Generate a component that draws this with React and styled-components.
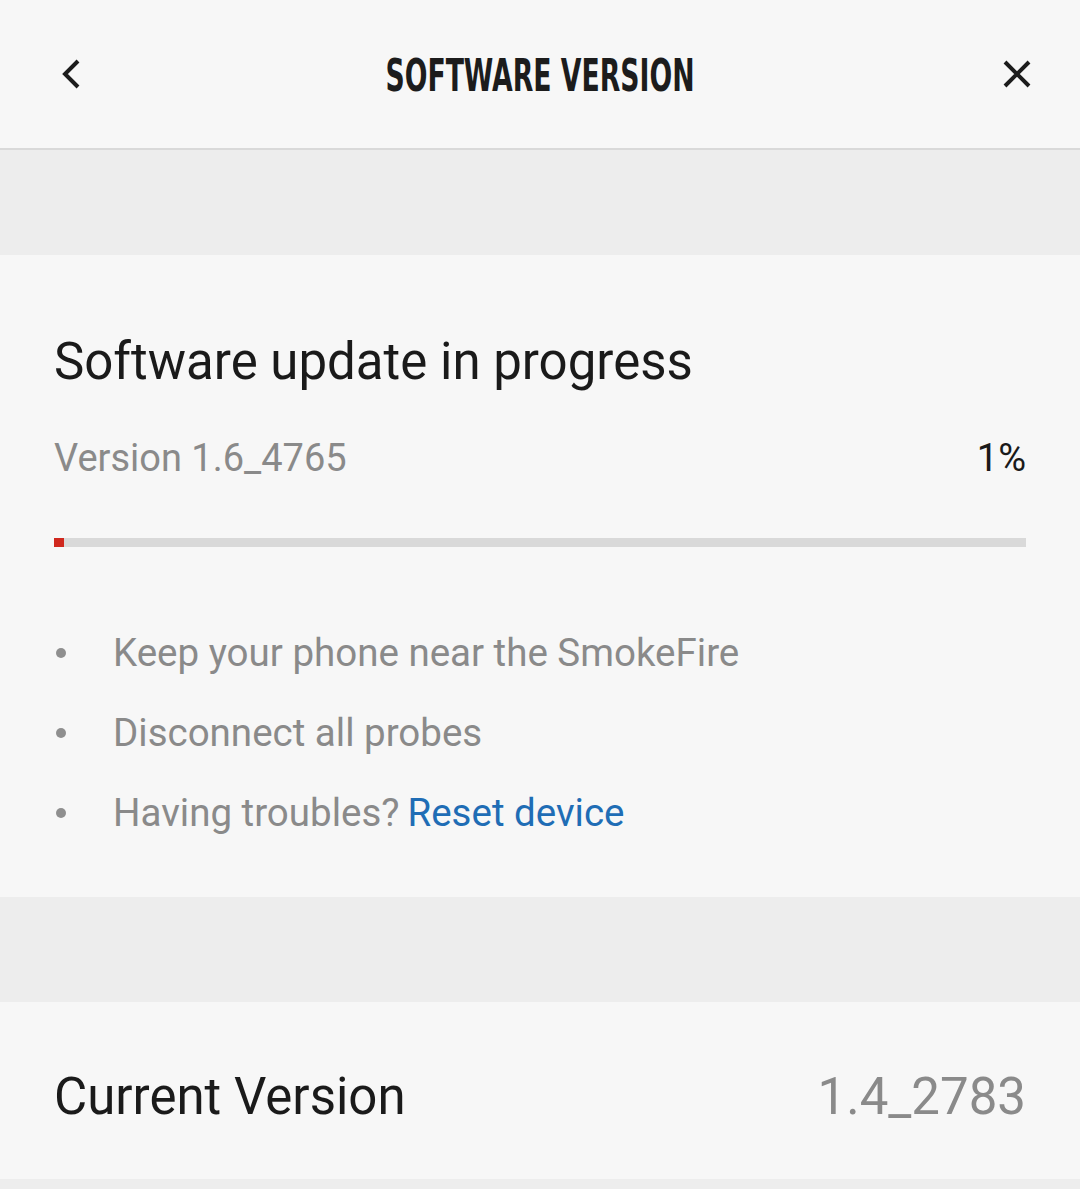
import React from "react";
import styled, { createGlobalStyle } from "styled-components";

const GlobalStyle = createGlobalStyle`
  html, body {
    margin: 0;
    padding: 0;
    background: #ededed;
  }
  body {
    font-family: Roboto, "Noto Sans", sans-serif;
  }
`;

const Page = styled.div`
  width: 1080px;
  min-height: 1189px;
  background: #ededed;
`;

const Header = styled.header`
  height: 148px;
  background: #f7f7f7;
  border-bottom: 2px solid #d9d9d9;
  display: grid;
  grid-template-columns: 120px 1fr 120px;
  align-items: center;
`;

const IconButton = styled.button`
  background: none;
  border: none;
  padding: 0;
  display: flex;
  align-items: center;
  justify-content: ${(p) => (p.right ? "flex-end" : "flex-start")};
  padding-left: ${(p) => (p.right ? "0" : "60px")};
  padding-right: ${(p) => (p.right ? "48px" : "0")};
  cursor: pointer;
`;

const Title = styled.h1`
  margin: 0;
  padding-top: 4px;
  text-align: center;
  font-family: "DejaVu Sans Condensed", "Liberation Sans Narrow", sans-serif;
  font-weight: bold;
  font-size: 44px;
  color: #1c1c1c;
  line-height: 1;
`;

const TitleText = styled.span`
  display: inline-block;
  transform: scaleX(0.675);
  transform-origin: center;
  white-space: nowrap;
`;

const Spacer = styled.div`
  height: 105px;
`;

const Section = styled.section`
  background: #f7f7f7;
  padding: ${(p) => p.pad || "0 54px"};
`;

const Heading = styled.h2`
  margin: 0;
  font-weight: 400;
  font-size: 51px;
  color: #1a1a1a;
  line-height: 60px;
`;

const VersionRow = styled.div`
  display: flex;
  justify-content: space-between;
  align-items: center;
  margin-top: 44px;
  font-size: 38px;
  line-height: 44px;
`;

const Muted = styled.span`
  color: #8a8a8a;
`;

const Dark = styled.span`
  color: #1a1a1a;
`;

const Track = styled.div`
  margin-top: 58px;
  height: 9px;
  background: #d9d9d9;
`;

const Fill = styled.div`
  height: 100%;
  background: #d0281e;
`;

const List = styled.ul`
  list-style: none;
  margin: 0;
  padding: 84px 0 0;
  display: flex;
  flex-direction: column;
  gap: 36px;
`;

const Item = styled.li`
  display: flex;
  align-items: center;
  font-size: 38.5px;
  line-height: 44px;
  color: #8a8a8a;
`;

const Dot = styled.span`
  width: 10px;
  height: 10px;
  border-radius: 50%;
  background: #8f8f8f;
  margin: 0 47px 0 2px;
  flex-shrink: 0;
`;

const Link = styled.a`
  color: #1f6db5;
  text-decoration: none;
  margin-left: 8px;
`;

const InfoRow = styled.div`
  box-sizing: border-box;
  display: flex;
  justify-content: space-between;
  align-items: center;
  height: 177px;
  padding-top: 12px;
`;

const Value = styled.span`
  font-size: 51px;
  color: #8a8a8a;
`;

export default function App() {
  const progress = 1;
  return (
    <Page>
      <GlobalStyle />
      <Header>
        <IconButton aria-label="Back">
          <svg width="24" height="34" viewBox="0 0 24 34">
            <path d="M18 4 L5 17 L18 30" fill="none" stroke="#1c1c1c" strokeWidth="4" />
          </svg>
        </IconButton>
        <Title>
          <TitleText>SOFTWARE VERSION</TitleText>
        </Title>
        <IconButton right aria-label="Close">
          <svg width="30" height="30" viewBox="0 0 30 30">
            <path d="M3 3 L27 27 M27 3 L3 27" fill="none" stroke="#1c1c1c" strokeWidth="4" />
          </svg>
        </IconButton>
      </Header>
      <Spacer />
      <Section pad="77px 54px 62px">
        <Heading>Software update in progress</Heading>
        <VersionRow>
          <Muted>Version 1.6_4765</Muted>
          <Dark>{progress}%</Dark>
        </VersionRow>
        <Track>
          <Fill style={{ width: `${progress}%` }} />
        </Track>
        <List>
          <Item>
            <Dot />
            Keep your phone near the SmokeFire
          </Item>
          <Item>
            <Dot />
            Disconnect all probes
          </Item>
          <Item>
            <Dot />
            Having troubles?<Link href="#">Reset device</Link>
          </Item>
        </List>
      </Section>
      <Spacer />
      <Section>
        <InfoRow>
          <Heading>Current Version</Heading>
          <Value>1.4_2783</Value>
        </InfoRow>
      </Section>
    </Page>
  );
}
